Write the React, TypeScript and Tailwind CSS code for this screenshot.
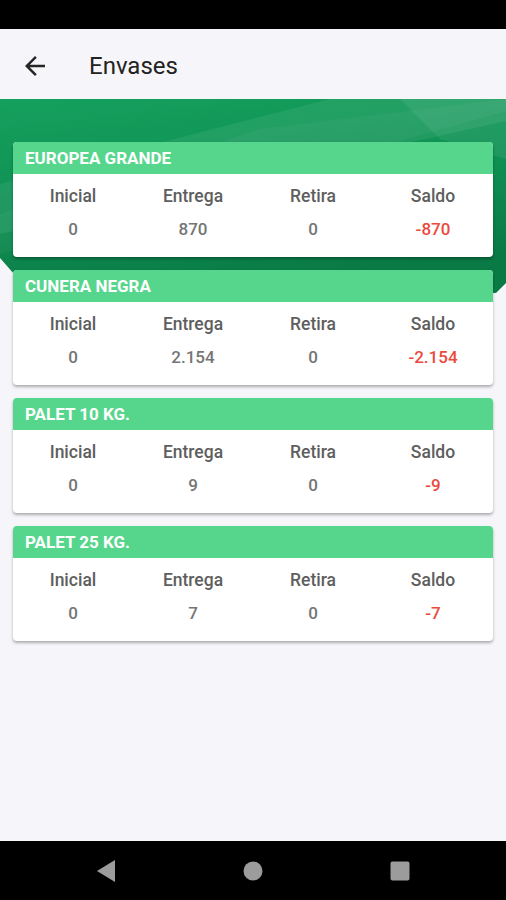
import React from 'react'

type Envase = {
  nombre: string
  inicial: string
  entrega: string
  retira: string
  saldo: string
}

const envases: Envase[] = [
  { nombre: 'EUROPEA GRANDE', inicial: '0', entrega: '870', retira: '0', saldo: '-870' },
  { nombre: 'CUNERA NEGRA', inicial: '0', entrega: '2.154', retira: '0', saldo: '-2.154' },
  { nombre: 'PALET 10 KG.', inicial: '0', entrega: '9', retira: '0', saldo: '-9' },
  { nombre: 'PALET 25 KG.', inicial: '0', entrega: '7', retira: '0', saldo: '-7' },
]

function Banner() {
  // decorative green header shape behind the first cards
  return (
    <svg className="absolute top-0 left-0" width="506" height="196" viewBox="0 0 506 196">
      <defs>
        <linearGradient id="bg" x1="0" y1="0" x2="0.3" y2="1">
          <stop offset="0" stopColor="#15a05e" />
          <stop offset="0.55" stopColor="#0f9053" />
          <stop offset="1" stopColor="#0a7a45" />
        </linearGradient>
      </defs>
      <polygon points="0,0 506,0 506,184 496,194 14,175 0,159" fill="url(#bg)" />
      <polygon points="0,85 330,0 506,0 506,22 0,135" fill="#ffffff" opacity="0.07" />
      <polygon points="0,115 260,30 506,0 506,12 0,155" fill="#ffffff" opacity="0.04" />
      <polygon points="400,0 506,0 506,60 440,40" fill="#ffffff" opacity="0.07" />
    </svg>
  )
}

function Card({ envase }: { envase: Envase }) {
  const cols = [
    { label: 'Inicial', value: envase.inicial },
    { label: 'Entrega', value: envase.entrega },
    { label: 'Retira', value: envase.retira },
    { label: 'Saldo', value: envase.saldo, red: true },
  ]

  return (
    <div className="rounded-[4px] overflow-hidden bg-white shadow-[0_2px_3px_rgba(0,0,0,0.3)]">
      <div className="h-[32px] bg-[#56d68c] px-[12px] flex items-center text-white font-bold text-[17px] leading-none">
        {envase.nombre}
      </div>
      <div className="grid grid-cols-4 pt-[12px] pb-[18px]">
        {cols.map((c) => (
          <div key={c.label} className="flex flex-col items-center">
            <span className="text-[17.5px] leading-[20px] font-medium text-[#5e5e5e]">{c.label}</span>
            <span
              className={`mt-[13px] text-[17px] leading-[20px] font-medium ${c.red ? 'text-[#ec4a3c]' : 'text-[#757575]'}`}
            >
              {c.value}
            </span>
          </div>
        ))}
      </div>
    </div>
  )
}

export default function App() {
  return (
    <div className="w-[506px] h-[900px] flex flex-col bg-[#f6f5f9] font-['Roboto',sans-serif] overflow-hidden">
      <div className="h-[29px] bg-black shrink-0" />

      <header className="h-[70px] shrink-0 flex items-center pl-[20px] pt-[3px] bg-[#f6f5f9]">
        <svg width="30" height="30" viewBox="0 0 24 24" fill="#262626">
          <path d="M20 11H7.83l5.59-5.59L12 4l-8 8 8 8 1.41-1.41L7.83 13H20v-2z" />
        </svg>
        <h1 className="ml-[39px] text-[24px] leading-none text-[#222222]">Envases</h1>
      </header>

      <main className="relative flex-1">
        <Banner />
        <div className="relative flex flex-col gap-[13px] px-[13px] pt-[43px]">
          {envases.map((e) => (
            <Card key={e.nombre} envase={e} />
          ))}
        </div>
      </main>

      <nav className="h-[59px] shrink-0 bg-black flex items-center justify-center gap-[123px]">
        <svg width="24" height="24" viewBox="0 0 24 24">
          <polygon points="21,1 21,23 3,12" fill="#9c9c9c" />
        </svg>
        <svg width="24" height="24" viewBox="0 0 24 24">
          <circle cx="12" cy="12" r="9.5" fill="#9c9c9c" />
        </svg>
        <svg width="24" height="24" viewBox="0 0 24 24">
          <rect x="2.5" y="2.5" width="19" height="19" rx="2" fill="#9c9c9c" />
        </svg>
      </nav>
    </div>
  )
}
